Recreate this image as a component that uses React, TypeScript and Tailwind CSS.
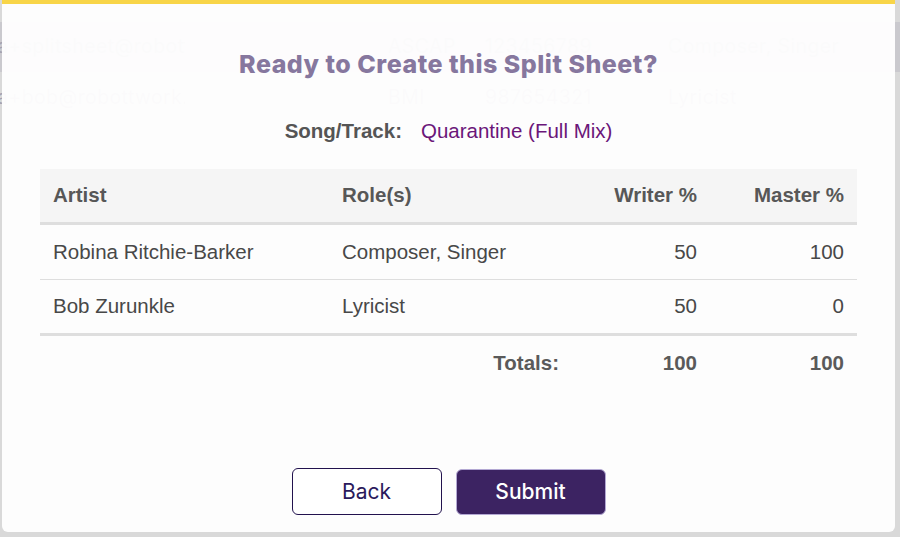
const ghostRows = [
  { email: "a+splitsheet@robottwork.com", pro: "ASCAP", ipi: "123456789", roles: "Composer, Singer", band: true },
  { email: "a+bob@robottwork.com", pro: "BMI", ipi: "987654321", roles: "Lyricist", band: false },
];

const splits = [
  { artist: "Robina Ritchie-Barker", roles: "Composer, Singer", writer: 50, master: 100 },
  { artist: "Bob Zurunkle", roles: "Lyricist", writer: 50, master: 0 },
];

const cols = "grid grid-cols-[290px_242px_138px_1fr] items-center";

export default function App() {
  const writerTotal = splits.reduce((s, r) => s + r.writer, 0);
  const masterTotal = splits.reduce((s, r) => s + r.master, 0);

  return (
    <div className="relative w-[900px] h-[537px] overflow-hidden bg-white">
      {/* page behind the dialog */}
      <div className="pt-[22px] font-['Inter',sans-serif] text-[19.5px] tracking-[0.4px] text-[#c4c0d0]">
        {ghostRows.map((r, i) => (
          <div
            key={i}
            className={`flex items-center h-[50px] mb-[1px] ${r.band ? "bg-[#eeedf3]" : ""}`}
          >
            <div className="w-[185px] overflow-hidden whitespace-nowrap">
              <span className="block -ml-[3px]">{r.email}</span>
            </div>
            <div className="w-[203px]" />
            <div className="w-[97px]">{r.pro}</div>
            <div className="w-[183px]">{r.ipi}</div>
            <div>{r.roles}</div>
          </div>
        ))}
      </div>

      {/* backdrop */}
      <div className="absolute inset-0 bg-black/15" />

      {/* dialog */}
      <div className="absolute left-[2px] top-0 w-[893px] h-[532px] bg-white/95 border-t-4 border-[#f8d548] rounded-b-[6px] px-[38px] pt-[44px] flex flex-col">
        <h2 className="text-center font-['Inter',sans-serif] font-extrabold text-[25px] leading-[32px] text-[#86779e] tracking-[0.5px]">
          Ready to Create this Split Sheet?
        </h2>

        <div className="mt-[39px] flex justify-center items-center gap-[19px] font-['Liberation_Sans',Arial,sans-serif] text-[20.5px] leading-[24px]">
          <span className="font-bold text-[#555]">Song/Track:</span>
          <span className="text-[#6b1679]">Quarantine (Full Mix)</span>
        </div>

        <div className="mt-[26px] font-['Liberation_Sans',Arial,sans-serif] text-[20.5px] text-[#484848]">
          <div className={`${cols} h-[56px] bg-[#f5f5f5] border-b-[3px] border-[#dedede] font-bold text-[#575757]`}>
            <div className="px-[13px]">Artist</div>
            <div className="px-[12px]">Role(s)</div>
            <div className="px-[13px] text-right">Writer %</div>
            <div className="px-[13px] text-right">Master %</div>
          </div>
          {splits.map((r, i) => (
            <div
              key={r.artist}
              className={`${cols} ${i === splits.length - 1 ? "h-[56px] border-b-[3px]" : "h-[55px] border-b"} border-[#dedede]`}
            >
              <div className="px-[13px]">{r.artist}</div>
              <div className="px-[12px]">{r.roles}</div>
              <div className="px-[13px] text-right">{r.writer}</div>
              <div className="px-[13px] text-right">{r.master}</div>
            </div>
          ))}
          <div className={`${cols} h-[54px] font-bold text-[#5a5a5a]`}>
            <div />
            <div className="px-[13px] text-right">Totals:</div>
            <div className="px-[13px] text-right">{writerTotal}</div>
            <div className="px-[13px] text-right">{masterTotal}</div>
          </div>
        </div>

        <div className="mt-[78px] flex justify-center items-center gap-[14px] font-['Inter',sans-serif] text-[21px]">
          <button className="w-[150px] h-[47px] rounded-[6px] border border-[#22124e] bg-white text-[#2a1a5c]">
            Back
          </button>
          <button className="w-[150px] h-[46px] rounded-[6px] border border-[#b3a8d3] bg-[#3c2362] text-white font-medium">
            Submit
          </button>
        </div>
      </div>
    </div>
  );
}
